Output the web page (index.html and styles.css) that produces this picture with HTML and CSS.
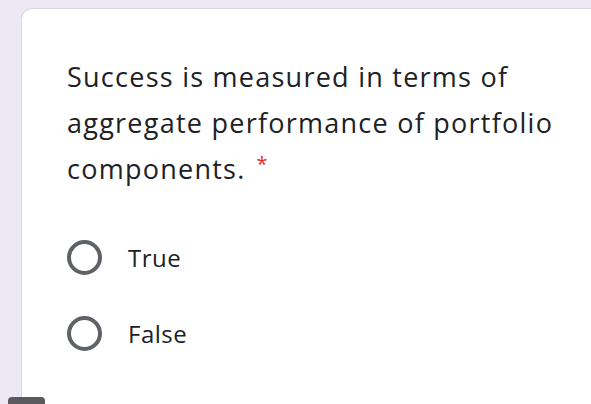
FILE: index.html
```html
<!DOCTYPE html>
<html>
<head>
<meta charset="utf-8">
<link rel="stylesheet" href="styles.css">
</head>
<body>
<div class="page">
  <div class="card">
    <div class="question"><span class="qtext">Success is measured in terms of aggregate performance of portfolio components.</span><span class="req">*</span></div>
    <div class="options">
      <div class="option"><span class="radio"></span><span class="label">True</span></div>
      <div class="option"><span class="radio"></span><span class="label">False</span></div>
    </div>
  </div>
  <div class="tab"></div>
</div>
</body>
</html>
```
FILE: styles.css
```css
html, body {
  margin: 0;
  padding: 0;
  width: 591px;
  height: 404px;
  overflow: hidden;
  background: #ede9f4;
}
.page {
  position: relative;
  width: 591px;
  height: 404px;
  overflow: hidden;
  padding: 8px 0 0 21px;
  box-sizing: border-box;
}
.card {
  background: #fff;
  border: 1px solid #ddd9e4;
  border-right: none;
  border-bottom: none;
  border-radius: 11px 0 0 0;
  height: 396px;
  box-sizing: border-box;
  padding: 45px 10px 0 45px;
  font-family: "Open Sans", "Noto Sans", sans-serif;
  color: #202124;
}
.question {
  font-size: 27px;
  letter-spacing: 1.25px;
  line-height: 46px;
  width: 525px;
}
.req {
  display: inline-block;
  color: #d93025;
  font-size: 20px;
  line-height: 20px;
  letter-spacing: 0;
  margin-left: 11px;
  vertical-align: 8px;
}
.options {
  margin-top: 48px;
  display: flex;
  flex-direction: column;
  gap: 42px;
}
.option {
  display: flex;
  align-items: center;
  height: 34px;
}
.radio {
  width: 35px;
  height: 35px;
  box-sizing: border-box;
  border: 4px solid #5f6368;
  border-radius: 50%;
}
.label {
  font-size: 24px;
  letter-spacing: 0.5px;
  margin-left: 26px;
}
.tab {
  position: absolute;
  left: 8px;
  top: 397px;
  width: 37px;
  height: 10px;
  background: #5a5a5c;
  border-radius: 4px 4px 0 0;
}
```
